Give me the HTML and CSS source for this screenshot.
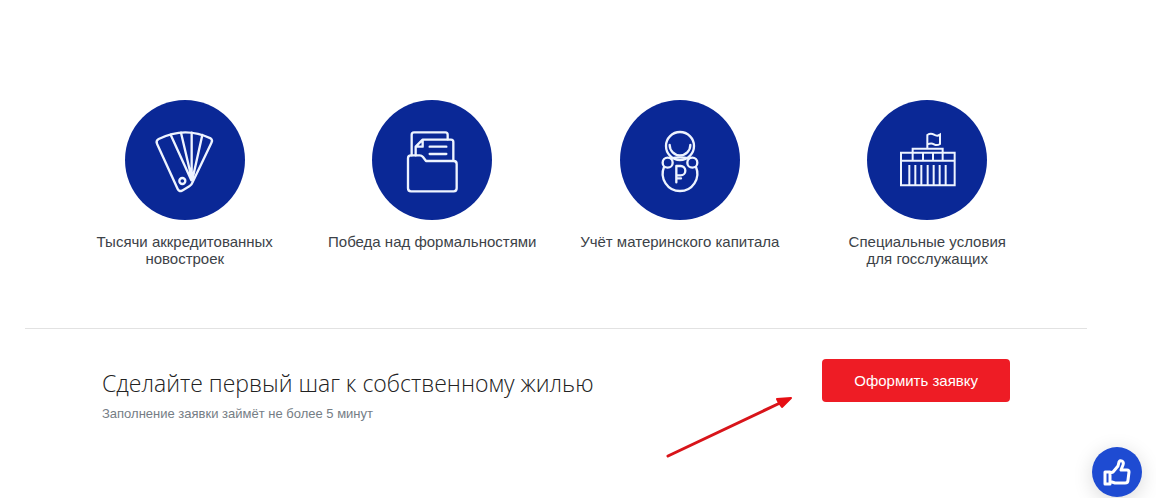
FILE: index.html
```html
<!DOCTYPE html>
<html lang="ru">
<head>
  <meta charset="UTF-8">
  <meta name="viewport" content="width=device-width, initial-scale=1">
  <title>Ипотека</title>
  <link rel="stylesheet" href="styles.css">
</head>
<body>
  <main class="page">
    <ul class="benefits">
      <li class="benefit">
        <svg class="benefit-icon" viewBox="15 15 360 360" aria-hidden="true">
          <circle class="disc" cx="195" cy="195" r="180"/>
          <path d="M111 146Q107 137 116 132Q194 93 272 130Q279 135 274 144L217 263Q215 270 208 274L186 287Q177 291 173 282Z"/>
          <path d="M152 119L214 256M183 113L215 250M215 113V252M247 120L217 254"/>
          <circle cx="187" cy="258" r="9"/>
        </svg>
        <p class="benefit-text">Тысячи аккредитованных<br>новостроек</p>
      </li>
      <li class="benefit">
        <svg class="benefit-icon" viewBox="15 15 360 360" aria-hidden="true">
          <circle class="disc" cx="195" cy="195" r="180"/>
          <path d="M134 181V119Q134 112 141 112H235Q242 112 242 119V133"/>
          <path d="M146 181V155L167 134H252Q259 134 259 141V197M167 134V155H146"/>
          <path d="M188 155H238M188 177H238"/>
          <path d="M132 181H158Q164 181 168 186L177 198H260Q269 198 269 207V280Q269 289 260 289H132Q123 289 123 280V190Q123 181 132 181Z"/>
        </svg>
        <p class="benefit-text">Победа над формальностями</p>
      </li>
      <li class="benefit">
        <svg class="benefit-icon" viewBox="15 15 360 360" aria-hidden="true">
          <circle class="disc" cx="195" cy="195" r="180"/>
          <circle cx="195" cy="153" r="42"/>
          <path d="M164 150A31 31 0 0 0 226 150"/>
          <circle cx="158" cy="203" r="15"/>
          <circle cx="232" cy="203" r="15"/>
          <path d="M168 190Q195 184 222 190M147 216A52 52 0 1 0 243 216"/>
          <path d="M184 262V213H197A14 14 0 0 1 197 241H184M184 250H198"/>
        </svg>
        <p class="benefit-text">Учёт материнского капитала</p>
      </li>
      <li class="benefit">
        <svg class="benefit-icon" viewBox="15 15 360 360" aria-hidden="true">
          <circle class="disc" cx="195" cy="195" r="180"/>
          <g class="straight">
            <path d="M117 173H278V271H117ZM117 197H278M152 197V161H242V197M183 173V197M213 173V197"/>
            <path d="M142 210V271M160 210V271M178 210V271M197 210V271M215 210V271M233 210V271M251 210V271"/>
            <path d="M196 161V120Q206 113 216 119T234 119V147Q225 153 216 148T196 149"/>
          </g>
        </svg>
        <p class="benefit-text">Специальные условия<br>для госслужащих</p>
      </li>
    </ul>

    <section class="request">
      <div class="request-info">
        <h2 class="request-title">Сделайте первый шаг к собственному жилью</h2>
        <p class="request-note">Заполнение заявки займёт не более 5 минут</p>
      </div>
      <div class="request-action">
        <button class="request-button" type="button">Оформить заявку</button>
        <svg class="arrow" viewBox="0 0 128 62" aria-hidden="true">
          <path class="arrow-line" d="M2 60L114 7"/>
          <path class="arrow-head" d="M125 2L111 3L113 7L116 11Z"/>
        </svg>
      </div>
    </section>
  </main>

  <button class="like-button" type="button" aria-label="Нравится">
    <svg class="like-icon" viewBox="0 0 28 28" aria-hidden="true">
      <path d="M2 14H7V26H2ZM7 15L10 14L15 8L16 4Q17 2 19 3Q21 4 20 7L18 12H24Q26 12 26 14L25 22Q25 25 22 25H12L9 24H7"/>
    </svg>
  </button>
</body>
</html>
```

FILE: styles.css
```css
* {
  box-sizing: border-box;
}
body {
  margin: 0;
  font-family: "Liberation Sans", Arial, sans-serif;
  background-color: #fff;
  color: #3c4248;
}
.page {
  min-height: 100vh;
  padding: 100px 69px 0 25px;
}
.benefits {
  display: grid;
  grid-template-columns: repeat(4, 1fr);
  margin: 0;
  padding: 0 36px 61px;
  list-style: none;
}
.benefit {
  display: flex;
  flex-direction: column;
  align-items: center;
  gap: 13px;
}
.benefit-icon {
  width: 120px;
  height: 120px;
  fill: none;
  stroke: #eef4ff;
  stroke-width: 7;
  stroke-linecap: round;
  stroke-linejoin: round;
}
.benefit-icon .disc {
  fill: #0a2896;
  stroke: none;
}
.benefit-icon .straight {
  stroke-width: 6;
  stroke-linecap: butt;
  stroke-linejoin: miter;
}
.benefit-text {
  margin: 0;
  font-size: 15px;
  line-height: 17px;
  text-align: center;
}
.request {
  display: flex;
  justify-content: space-between;
  align-items: flex-start;
  padding: 30px 77px;
  border-top: 1px solid #e2e2e2;
}
.request-info {
  padding-top: 8px;
}
.request-title {
  margin: 0;
  font-family: "Open Sans", sans-serif;
  font-size: 23px;
  font-weight: 300;
  line-height: 32px;
  color: #222;
}
.request-note {
  margin: 6px 0 0;
  font-size: 13px;
  line-height: 18px;
  color: #757d85;
}
.request-action {
  position: relative;
}
.request-button {
  padding: 13px 32px;
  border: none;
  border-radius: 4px;
  background-color: #ee1c25;
  color: #fff;
  font-family: inherit;
  font-size: 15px;
  line-height: 17px;
  cursor: pointer;
}
.request-button:hover {
  background-color: #d5141c;
}
/* pointer to the request button */
.arrow {
  position: absolute;
  top: 37px;
  right: calc(100% + 28px);
  width: 128px;
  height: 62px;
  pointer-events: none;
}
.arrow-line {
  fill: none;
  stroke: #d8141a;
  stroke-width: 3;
  stroke-linecap: round;
}
.arrow-head {
  fill: #e60f14;
  stroke: #e60f14;
  stroke-width: 2;
  stroke-linejoin: round;
}
.like-button {
  position: fixed;
  right: 14px;
  bottom: 1px;
  display: flex;
  justify-content: center;
  align-items: center;
  width: 50px;
  height: 50px;
  padding: 0;
  border: none;
  border-radius: 50%;
  background-color: #1e4bd2;
  box-shadow: 0 4px 20px rgba(0, 0, 0, 0.15);
  cursor: pointer;
}
.like-icon {
  width: 28px;
  height: 28px;
  fill: none;
  stroke: #fff;
  stroke-width: 3;
  stroke-linejoin: round;
}
```
